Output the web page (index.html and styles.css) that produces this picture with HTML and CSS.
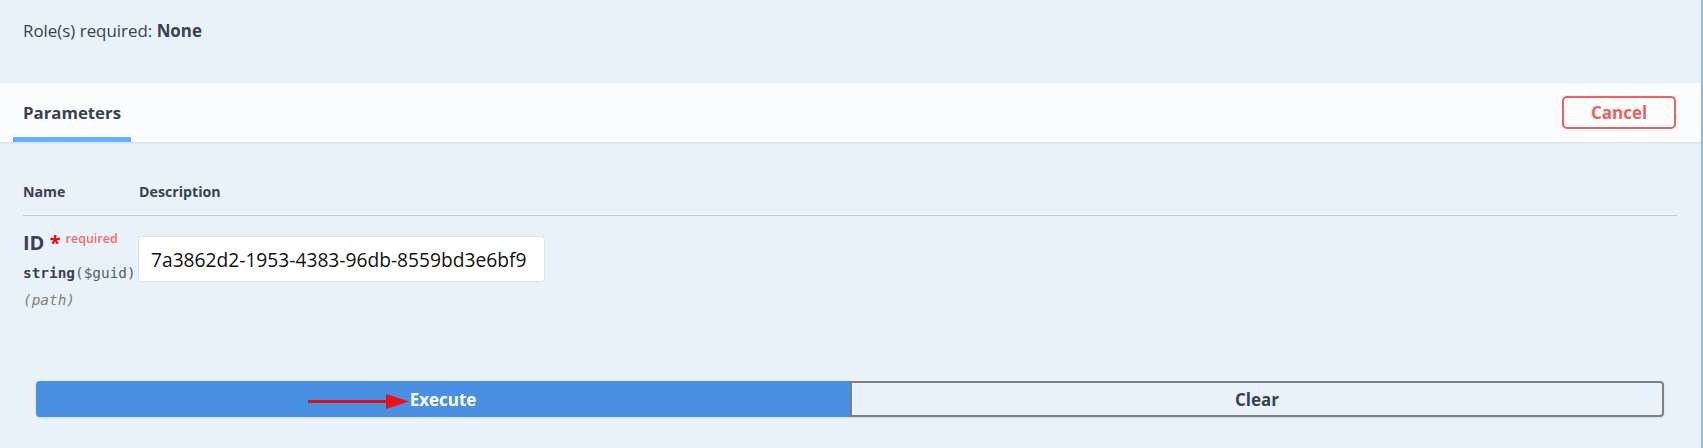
FILE: index.html
```html
<!DOCTYPE html>
<html lang="en">
<head>
<meta charset="utf-8">
<title>Operation</title>
<link rel="stylesheet" href="styles.css">
</head>
<body>
<div class="opblock">
  <div class="desc">
    <p>Role(s) required: <b>None</b></p>
  </div>
  <div class="section-header">
    <div class="tab-item"><span class="tab-title">Parameters</span></div>
    <button class="btn cancel">Cancel</button>
  </div>
  <div class="params">
    <div class="params-head">
      <div class="col-name">Name</div>
      <div class="col-desc">Description</div>
    </div>
    <div class="param-row">
      <div class="col-name">
        <div class="param-name">ID<span class="star">&nbsp;*</span><span class="req">required</span></div>
        <div class="param-type">string<span class="fmt">($guid)</span></div>
        <div class="param-in">(path)</div>
      </div>
      <div class="col-desc">
        <input class="text-input" type="text" value="7a3862d2-1953-4383-96db-8559bd3e6bf9">
      </div>
    </div>
  </div>
  <div class="btn-group">
    <button class="btn execute">
      <svg class="arrow" width="104" height="16" viewBox="0 0 104 16">
        <rect x="0" y="6" width="82" height="3" fill="#d8121c"/>
        <polygon points="78,0 101,7.5 78,15" fill="#ec1018"/>
      </svg>
      Execute
    </button>
    <button class="btn clear">Clear</button>
  </div>
</div>
</body>
</html>
```
FILE: styles.css
```css
html, body {
  margin: 0;
  padding: 0;
}
body {
  width: 1703px;
  height: 448px;
  overflow: hidden;
  background: #e9f1f9;
  font-family: "Open Sans", "Noto Sans", sans-serif;
  color: #3b4151;
}
.opblock {
  width: 1701px;
  height: 448px;
  border-right: 2px solid #8ebef0;
  background: #e9f1f9;
  display: flex;
  flex-direction: column;
}
.desc {
  height: 83px;
  padding: 0 23px;
  box-sizing: border-box;
}
.desc p {
  margin: 0;
  padding-top: 20px;
  font-size: 16.9px;
  line-height: 22px;
}
.desc b {
  font-weight: 700;
}
.section-header {
  height: 59px;
  box-sizing: border-box;
  background: #fbfcfe;
  box-shadow: 0 1px 2px rgba(0, 0, 0, 0.1);
  display: flex;
  align-items: stretch;
  justify-content: space-between;
  padding: 0 25px 0 23px;
  position: relative;
  z-index: 1;
}
.tab-item {
  display: flex;
  align-items: center;
  position: relative;
  font-size: 16.8px;
  font-weight: 700;
}
.tab-item::after {
  content: "";
  position: absolute;
  bottom: 0;
  left: -10%;
  width: 120%;
  height: 5px;
  background: #61affe;
}
.btn {
  font-family: "Open Sans", "Noto Sans", sans-serif;
  font-weight: 700;
  font-size: 17px;
  background: transparent;
  cursor: pointer;
  box-sizing: border-box;
}
.cancel {
  align-self: center;
  width: 114px;
  height: 33px;
  border: 2px solid #ee5f61;
  border-radius: 5px;
  color: #ee5f61;
  padding: 0;
  line-height: 27px;
}
.params {
  padding: 39px 24px 0 23px;
}
.params-head {
  display: grid;
  grid-template-columns: 116px 1fr;
  font-size: 14.2px;
  font-weight: 700;
  line-height: 20px;
  padding-top: 1px;
  padding-bottom: 13px;
  border-bottom: 1px solid #c5ccd5;
}
.param-row {
  display: grid;
  grid-template-columns: 115px 1fr;
  padding-top: 15px;
}
.param-name {
  font-size: 20px;
  font-weight: 700;
  line-height: 24px;
  white-space: nowrap;
}
.star {
  color: #f00;
}
.req {
  color: rgba(255, 0, 0, 0.6);
  font-size: 12.5px;
  font-weight: 600;
  padding-left: 5px;
  position: relative;
  top: -7px;
}
.param-type {
  margin-top: 5px;
  font-family: "DejaVu Sans Mono", monospace;
  font-size: 14.4px;
  font-weight: 700;
  line-height: 20px;
  white-space: nowrap;
}
.fmt {
  color: #5a5e66;
  font-weight: 400;
}
.param-in {
  margin-top: 7px;
  font-family: "DejaVu Sans Mono", monospace;
  font-size: 14.4px;
  font-style: italic;
  color: #808080;
  line-height: 20px;
}
.col-desc {
  min-width: 0;
}
.text-input {
  display: block;
  margin-top: 5px;
  width: 407px;
  height: 46px;
  box-sizing: border-box;
  border: 1px solid #dde2e8;
  border-radius: 4px;
  background: #fff;
  padding: 0 12px;
  font-family: "Open Sans", "Noto Sans", sans-serif;
  font-size: 19.2px;
  color: #111;
  outline: none;
}
.btn-group {
  display: flex;
  padding: 0 37px 0 36px;
  margin-top: auto;
  margin-bottom: 31px;
}
.btn-group .btn {
  flex: 1 1 50%;
  height: 36px;
  padding: 0;
  box-shadow: 0 1px 2px rgba(0, 0, 0, 0.1);
}
.execute {
  position: relative;
  background: #4990e2;
  border: 2px solid #4990e2;
  color: #fff;
  border-radius: 4px 0 0 4px;
}
.arrow {
  position: absolute;
  left: 270px;
  top: 11px;
}
.clear {
  border: 2px solid #808080;
  border-radius: 0 4px 4px 0;
  color: #3b4151;
}
```
